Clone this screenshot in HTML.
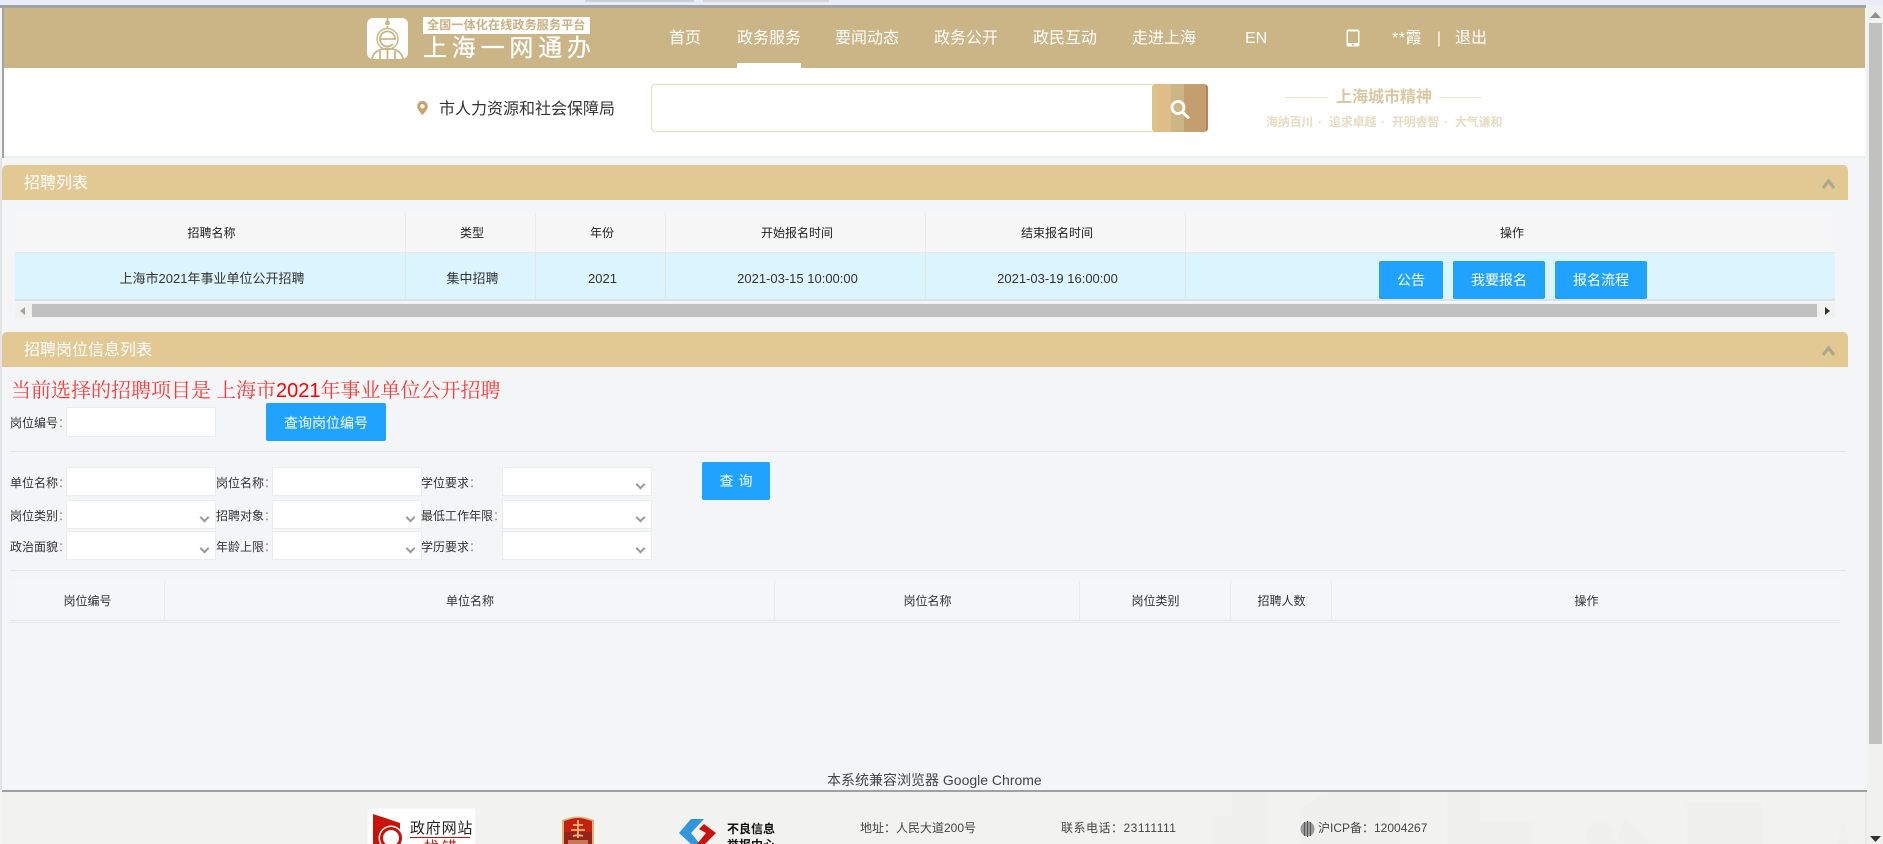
<!DOCTYPE html>
<html lang="zh-CN">
<head>
<meta charset="utf-8">
<title>招聘列表</title>
<style>
html,body{margin:0;padding:0;width:1883px;height:844px;overflow:hidden;background:#f4f5f7}
body{position:relative;font-family:"Liberation Sans","Noto Sans CJK SC",sans-serif;font-size:12px;color:#333}
.a,.t{position:absolute}
.t{white-space:nowrap}
.nav{top:27px;height:24px;line-height:24px;font-size:16px;color:#fff;width:64px;text-align:center}
.ph{left:2px;width:1846px;height:35px;background:#e2c994;border-radius:5px 5px 0 0;color:#fff;font-size:16px;line-height:37px}
.ph span{position:absolute;left:22px;top:0}
.ph svg{position:absolute;left:1819px;top:12px}
.th,.td{position:absolute;text-align:center;box-sizing:border-box;white-space:nowrap}
.th{top:213px;height:40px;line-height:40px;background:#f6f6f6;border-right:1px solid #ebebeb;border-bottom:1px solid #e8e8e8;color:#222;font-size:12px;padding-left:3px}
.td{top:253px;height:48px;line-height:51px;background:#dcf4fd;border-right:1px solid #e1e6e8;border-bottom:2px solid #dbe3e6;color:#333;font-size:13px;padding-left:4px}
.btn{position:absolute;background:#1fa3ff;color:#fff;text-align:center;border-radius:2px;font-size:14px}
.in{position:absolute;box-sizing:border-box;background:#fff;border:1px solid #ececec;width:150px;height:29px}
.sel::after{content:"";position:absolute;right:7px;top:13px;width:5px;height:5px;border-right:2.500px solid #9a9a9a;border-bottom:2.500px solid #9a9a9a;transform:rotate(45deg)}
.lb{position:absolute;white-space:nowrap;font-size:12px;color:#333;height:30px;line-height:30px}
.lb i{font-style:normal;color:#a08c60}
.th2{position:absolute;top:581px;height:40px;line-height:40px;text-align:center;box-sizing:border-box;background:#f5f6f7;border-right:1px solid #ebebeb;border-bottom:1px solid #e6e6e6;font-size:12px;color:#333;padding-left:1px}
.hr{position:absolute;left:10px;width:1836px;height:1px;background:#e6e6e6}
.spirit{color:#e6dcc2;font-size:12px;font-weight:700;top:114px;line-height:16px}
.ft{top:820px;line-height:17px;font-size:12px;color:#444}
</style>
</head>
<body>
<!-- browser strip -->
<div class="a" style="left:0;top:0;width:1883px;height:5px;background:#e9edf7"></div>
<div class="a" style="left:585px;top:0;width:109px;height:2px;background:#c9cfdb"></div>
<div class="a" style="left:703px;top:0;width:126px;height:2px;background:#d3d6dd"></div>
<div class="a" style="left:0;top:5px;width:1866px;height:3px;background:#a3a3a3"></div>
<div class="a" style="left:2px;top:5px;width:2px;height:153px;background:#a3a3a3"></div>

<!-- scrollbar -->
<div class="a" style="left:1867px;top:5px;width:16px;height:839px;background:#f1f1f0"></div>
<div class="a" style="left:1869px;top:23px;width:13px;height:721px;background:#c1c1c1"></div>
<svg class="a" style="left:1870px;top:12px" width="11" height="6"><path d="M5.500 0L11 6H0z" fill="#8f8f8f"/></svg>
<svg class="a" style="left:1870px;top:836px" width="11" height="6"><path d="M0 0H11L5.500 6z" fill="#333"/></svg>

<!-- header -->
<div class="a" style="left:4px;top:8px;width:1861px;height:60px;background:#cbb485"></div>
<div class="a" style="left:4px;top:68px;width:1861px;height:90px;background:#fff"></div>
<div class="a" style="left:4px;top:156px;width:1861px;height:2px;background:#eeeff1"></div>

<!-- logo -->
<svg class="a" style="left:367px;top:18px" width="41" height="41" viewBox="0 0 41 41">
<rect width="41" height="41" rx="6" fill="#fff"/>
<g fill="none" stroke="#cbb485" stroke-width="1.800">
<path d="M20.500 0V6"/><circle cx="20.500" cy="5" r="2.400" fill="#cbb485" stroke="none"/>
<path d="M20.500 8V11"/>
<path d="M13 21H28A7.500 7.500 0 1 0 26 26"/>
<circle cx="20.500" cy="21" r="10.500" stroke-width="1.400"/>
<path d="M5 41C6 34 13 30.500 20.500 30.500S35 34 36 41M20.500 30.500V41M13 33V41M28 33V41"/>
</g>
</svg>
<div class="a" style="left:423px;top:17px;width:167px;height:17px;background:#fff"></div>
<div class="t" style="left:427px;top:17px;font-size:12px;line-height:17px;color:#c9b181;font-weight:700;width:159px;letter-spacing:.2px">全国一体化在线政务服务平台</div>
<div class="t" style="left:423px;top:34px;font-size:24px;line-height:30px;color:#fff;letter-spacing:4.800px;-webkit-text-stroke:.3px #fff">上海一网通办</div>

<!-- nav -->
<div class="t nav" style="left:669px;width:32px">首页</div>
<div class="t nav" style="left:737px">政务服务</div>
<div class="a" style="left:737px;top:63px;width:64px;height:5px;background:#fff"></div>
<div class="t nav" style="left:835px">要闻动态</div>
<div class="t nav" style="left:934px">政务公开</div>
<div class="t nav" style="left:1033px">政民互动</div>
<div class="t nav" style="left:1132px">走进上海</div>
<div class="t nav" style="left:1245px;width:22px">EN</div>
<svg class="a" style="left:1346px;top:29px" width="14" height="18" viewBox="0 0 14 18"><rect x=".5" y=".5" width="13" height="17" rx="2" fill="#fff"/><rect x="2" y="2.500" width="10" height="11.500" fill="#cbb485"/><circle cx="7" cy="15.800" r="1" fill="#cbb485"/></svg>
<div class="t nav" style="left:1392px;width:auto;letter-spacing:.5px">**霞</div>
<div class="t nav" style="left:1434px;width:10px">|</div>
<div class="t nav" style="left:1455px;width:32px">退出</div>

<!-- location & search -->
<svg class="a" style="left:417px;top:101px" width="11" height="14" viewBox="0 0 11 14"><path d="M5.500 0A5.300 5.300 0 0 0 .2 5.300C.2 8.800 5.500 14 5.500 14S10.800 8.800 10.800 5.300A5.300 5.300 0 0 0 5.500 0Z" fill="#c8a268"/><circle cx="5.500" cy="5.300" r="2.200" fill="#fff"/></svg>
<div class="t" style="left:439px;top:98px;font-size:16px;line-height:24px;color:#333;letter-spacing:0">市人力资源和社会保障局</div>
<div class="a" style="left:651px;top:84px;width:503px;height:48px;box-sizing:border-box;border:1px solid #e8dcc0;border-radius:4px 0 0 4px;background:#fff"></div>
<div class="a" style="left:1152px;top:84px;width:56px;height:48px;border-radius:4px;overflow:hidden;background:#c49e6e">
<div class="a" style="left:0;top:0;width:6px;height:48px;background:#dcc286"></div>
<div class="a" style="left:6px;top:0;width:13px;height:48px;background:#e0bc88"></div>
<div class="a" style="left:19px;top:0;width:13px;height:48px;background:#cdb685"></div>
<div class="a" style="left:54px;top:0;width:2px;height:48px;background:#bd7e55"></div>
<svg class="a" style="left:17px;top:15px" width="21" height="20" viewBox="0 0 21 20"><circle cx="9" cy="8.500" r="6" fill="none" stroke="#fff" stroke-width="2.800"/><path d="M13.500 13L19 18.500" stroke="#fff" stroke-width="3" stroke-linecap="round"/></svg>
</div>

<!-- spirit -->
<div class="a" style="left:1285px;top:97px;width:43px;height:1px;background:#efe6ce"></div>
<div class="a" style="left:1439px;top:97px;width:43px;height:1px;background:#efe6ce"></div>
<div class="t" style="left:1336px;top:87px;font-size:16px;line-height:22px;font-weight:700;color:#d9c8a2">上海城市精神</div>
<div class="t spirit" style="left:1266px;letter-spacing:-.2px">海纳百川</div>
<div class="t spirit" style="left:1318px">·</div>
<div class="t spirit" style="left:1329px;letter-spacing:-.2px">追求卓越</div>
<div class="t spirit" style="left:1381px">·</div>
<div class="t spirit" style="left:1392px;letter-spacing:-.2px">开明睿智</div>
<div class="t spirit" style="left:1444px">·</div>
<div class="t spirit" style="left:1455px;letter-spacing:-.2px">大气谦和</div>

<!-- panel 1 -->
<div class="a" style="left:0;top:158px;width:2px;height:632px;background:#e3e4e7"></div>
<div class="a ph" style="top:165px"><span>招聘列表</span><svg width="15" height="14" viewBox="0 0 15 14"><path d="M2 11L7.500 4L13 11" fill="none" stroke="#a9a98f" stroke-width="3.200"/></svg></div>

<div class="th" style="left:15px;width:391px">招聘名称</div>
<div class="th" style="left:406px;width:130px">类型</div>
<div class="th" style="left:536px;width:130px">年份</div>
<div class="th" style="left:666px;width:260px">开始报名时间</div>
<div class="th" style="left:926px;width:260px">结束报名时间</div>
<div class="th" style="left:1186px;width:649px;border-right:0">操作</div>

<div class="td" style="left:15px;width:391px">上海市2021年事业单位公开招聘</div>
<div class="td" style="left:406px;width:130px">集中招聘</div>
<div class="td" style="left:536px;width:130px">2021</div>
<div class="td" style="left:666px;width:260px">2021-03-15 10:00:00</div>
<div class="td" style="left:926px;width:260px">2021-03-19 16:00:00</div>
<div class="td" style="left:1186px;width:649px;border-right:0"></div>
<div class="btn" style="left:1379px;top:261px;width:64px;height:38px;line-height:38px">公告</div>
<div class="btn" style="left:1453px;top:261px;width:92px;height:38px;line-height:38px">我要报名</div>
<div class="btn" style="left:1555px;top:261px;width:92px;height:38px;line-height:38px">报名流程</div>

<div class="a" style="left:15px;top:303px;width:1820px;height:15px;background:#f1f1f0"></div>
<div class="a" style="left:32px;top:304px;width:1785px;height:13px;background:#c0c0c0"></div>
<svg class="a" style="left:20px;top:307px" width="5" height="8"><path d="M5 0V8L0 4z" fill="#a3a3a3"/></svg>
<svg class="a" style="left:1825px;top:307px" width="5" height="8"><path d="M0 0V8L5 4z" fill="#333"/></svg>

<!-- panel 2 -->
<div class="a ph" style="top:332px"><span>招聘岗位信息列表</span><svg width="15" height="14" viewBox="0 0 15 14"><path d="M2 11L7.500 4L13 11" fill="none" stroke="#a9a98f" stroke-width="3.200"/></svg></div>

<div class="t" style="left:11px;top:377px;font-family:'Liberation Serif','Noto Serif CJK SC',serif;font-size:20px;line-height:28px;color:#fb3a3a">当前选择的招聘项目是 上海市<span style="font-family:'Liberation Sans',sans-serif;color:#f00">2021</span>年事业单位公开招聘</div>

<div class="lb" style="left:10px;top:408px">岗位编号<i>：</i></div>
<div class="in" style="left:66px;top:407px;height:30px"></div>
<div class="btn" style="left:266px;top:403px;width:120px;height:38px;line-height:40px">查询岗位编号</div>
<div class="hr" style="top:451px"></div>

<div class="lb" style="left:10px;top:468px">单位名称<i>：</i></div>
<div class="in" style="left:66px;top:467px"></div>
<div class="lb" style="left:216px;top:468px">岗位名称<i>：</i></div>
<div class="in" style="left:272px;top:467px"></div>
<div class="lb" style="left:421px;top:468px">学位要求<i>：</i></div>
<div class="in sel" style="left:502px;top:467px"></div>
<div class="btn" style="left:702px;top:462px;width:68px;height:38px;line-height:38px;letter-spacing:5px;text-indent:5px">查询</div>

<div class="lb" style="left:10px;top:501px">岗位类别<i>：</i></div>
<div class="in sel" style="left:66px;top:500px"></div>
<div class="lb" style="left:216px;top:501px">招聘对象<i>：</i></div>
<div class="in sel" style="left:272px;top:500px"></div>
<div class="lb" style="left:421px;top:501px">最低工作年限<i>：</i></div>
<div class="in sel" style="left:502px;top:500px"></div>

<div class="lb" style="left:10px;top:532px">政治面貌<i>：</i></div>
<div class="in sel" style="left:66px;top:531px"></div>
<div class="lb" style="left:216px;top:532px">年龄上限<i>：</i></div>
<div class="in sel" style="left:272px;top:531px"></div>
<div class="lb" style="left:421px;top:532px">学历要求<i>：</i></div>
<div class="in sel" style="left:502px;top:531px"></div>

<div class="hr" style="top:570px"></div>

<div class="th2" style="left:10px;width:155px">岗位编号</div>
<div class="th2" style="left:165px;width:610px">单位名称</div>
<div class="th2" style="left:775px;width:305px">岗位名称</div>
<div class="th2" style="left:1080px;width:151px">岗位类别</div>
<div class="th2" style="left:1231px;width:101px">招聘人数</div>
<div class="th2" style="left:1332px;width:508px;border-right:0">操作</div>
<div class="a" style="left:10px;top:622px;width:1830px;height:1px;background:#e9e9e9"></div>

<div class="t" style="left:827px;top:770px;font-size:14px;line-height:20px;color:#444">本系统兼容浏览器 Google Chrome</div>

<!-- footer -->
<div class="a" style="left:2px;top:790px;width:1865px;height:54px;background:#f2f2f1;overflow:hidden">
<svg class="a" style="left:0;top:0" width="1865" height="54">
<g fill="#f0f0ef">
<path d="M1230 0H1266V54H1230ZM1208 26H1230V54H1208ZM1298 18L1330 0H1398V54H1298ZM1445 0H1478V54H1445ZM1478 32H1530V54H1478ZM1583 54C1585 40 1590 32 1598 32C1606 32 1612 40 1615 54ZM1615 54L1622 28L1650 54ZM1685 12H1760V54H1685ZM1835 54L1840 30L1848 54Z"/>
</g>
</svg>
</div>
<div class="a" style="left:2px;top:790px;width:1865px;height:2px;background:#a0a0a0"></div>
<div class="a" style="left:1865px;top:792px;width:2px;height:52px;background:#e9e9e9"></div>

<div class="a" style="left:367px;top:808px;width:109px;height:36px;box-sizing:border-box;background:#fff;border:1px solid #f7f7f7;border-radius:3px 3px 0 0;border-bottom:0;overflow:hidden">
<svg class="a" style="left:5px;top:5px" width="34" height="31" viewBox="0 0 34 31"><path d="M0 0L27 9V31H0Z" fill="#c9130a"/><circle cx="18" cy="24" r="12.500" fill="#fff"/><circle cx="18" cy="24" r="9.500" fill="#fff" stroke="#c9130a" stroke-width="3"/></svg>
<div class="t" style="left:42px;top:9px;font-size:15px;line-height:22px;color:#222;letter-spacing:.8px">政府网站</div>
<div class="a" style="left:42px;top:28px;width:60px;height:1px;background:#c9130a"></div>
<div class="t" style="left:56px;top:29px;font-size:15px;line-height:20px;color:#c9130a;letter-spacing:3px">找错</div>
</div>

<svg class="a" style="left:562px;top:816px" width="32" height="28" viewBox="0 0 32 28"><path d="M0 4L8 1.500Q16-.5 24 1.500L32 4V28H0Z" fill="#d9b777"/><path d="M2 5L9 3Q16 1 23 3L30 5V28H2Z" fill="#c61f10"/><rect x="2" y="16" width="28" height="12" fill="#96221b"/><path d="M16 4V22M11 9H21M9 14H23M11 20C14 19 18 19 21 20" stroke="#dfb87c" stroke-width="1.800" fill="none"/><rect x="6" y="24" width="20" height="4" fill="#dfb87c" opacity=".6"/></svg>

<svg class="a" style="left:678px;top:818px" width="40" height="26" viewBox="0 0 40 26"><path d="M13 1H26L13 15L22 26H13L1 15Z" fill="#3296dc"/><path d="M26 6L38 15L27 26H19L28 15L21 11Z" fill="#c9130a"/></svg>
<div class="t" style="left:727px;top:821px;font-size:12px;line-height:17px;font-weight:700;color:#111">不良信息</div>
<div class="t" style="left:727px;top:837px;font-size:12px;line-height:17px;font-weight:700;color:#111">举报中心</div>

<div class="t ft" style="left:860px">地址：人民大道200号</div>
<div class="t ft" style="left:1061px;letter-spacing:.5px">联系电话：23111111</div>
<svg class="a" style="left:1300px;top:821px" width="15" height="16" viewBox="0 0 15 16"><ellipse cx="7.500" cy="8" rx="7" ry="7.500" fill="#9a9a9a"/><path d="M4.500 1V15M7.500 0V16M10.500 1V15" stroke="#555" stroke-width="1"/></svg>
<div class="t ft" style="left:1318px">沪ICP备：12004267</div>
</body>
</html>
